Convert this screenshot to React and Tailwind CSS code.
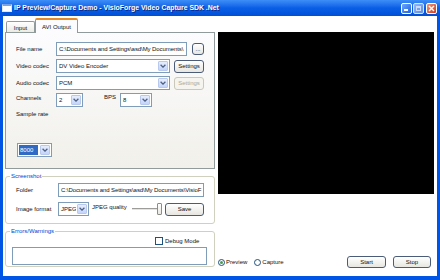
import React from "react";

function Chevron() {
  return (
    <svg width="6" height="4" viewBox="0 0 6 4">
      <path d="M0.6 0.7 L3 3.1 L5.4 0.7" fill="none" stroke="#4d6185" strokeWidth="1.3" />
    </svg>
  );
}

function Combo({ className, text, selected }) {
  return (
    <div className={"flex h-[14px] border border-[#7f9db9] bg-white " + className}>
      {selected ? (
        <div className="flex-1 m-px flex items-center pl-[1px] bg-[#316ac5] text-white whitespace-nowrap overflow-hidden">{text}</div>
      ) : (
        <div className="flex-1 flex items-center pl-[2px] whitespace-nowrap overflow-hidden">{text}</div>
      )}
      <div className="w-[10px] m-px rounded-[1px] border border-[#b9c9ee] bg-linear-to-b from-[#e6edfd] to-[#c4d5fa] flex items-center justify-center">
        <Chevron />
      </div>
    </div>
  );
}

function TextBox({ className, children }) {
  return (
    <div className={"h-[14px] border border-[#7f9db9] bg-white flex items-center pl-[2px] overflow-hidden whitespace-nowrap tracking-[-0.08px] " + className}>
      {children}
    </div>
  );
}

function Btn({ className, children, disabled }) {
  return (
    <div
      className={
        "flex items-center justify-center rounded-[3px] border whitespace-nowrap " +
        (disabled
          ? "border-[#cac8bb] text-[#aca899] bg-[#f5f4ee] "
          : "border-[#4a5c78] bg-linear-to-b from-white to-[#e7e6e0] ") +
        className
      }
    >
      {children}
    </div>
  );
}

export default function App() {
  return (
    <div className="w-[440px] h-[280px] flex flex-col bg-[#0055e5] overflow-hidden text-[#111] text-[6px] leading-none font-['Liberation_Sans',Arial,sans-serif]">
      {/* Title bar */}
      <div className="h-[16px] flex items-center bg-linear-to-b from-[#3d8ef7] via-[#0a5ee6] to-[#0050d6] pl-[2px] pr-[3px]">
        <div className="w-[10px] h-[8px] bg-white border border-[#dfe8f7] border-t-[2px] border-t-[#7ba3e8]" />
        <span className="ml-[2px] text-white font-bold text-[6.9px] [text-shadow:1px_1px_0_#0b2a8a] whitespace-nowrap">
          IP Preview/Capture Demo - VisioForge Video Capture SDK .Net
        </span>
        <div className="ml-auto flex items-center">
          <div className="w-[11px] h-[11px] rounded-[2px] border border-white bg-linear-to-br from-[#6aa6ff] to-[#1f5fdc] flex items-end pl-[2px] pb-[2px]">
            <div className="w-[4px] h-[2px] bg-white" />
          </div>
          <div className="ml-px w-[11px] h-[11px] rounded-[2px] border border-[#d7e3fa] bg-linear-to-br from-[#8fb5f5] to-[#5a8ee8] flex items-center justify-center">
            <div className="w-[5px] h-[5px] border border-[#c9daf8] border-t-2" />
          </div>
          <div className="ml-[2px] w-[11px] h-[11px] rounded-[2px] border border-white bg-linear-to-br from-[#ee9375] to-[#c8391b] flex items-center justify-center">
            <svg width="7" height="7" viewBox="0 0 7 7">
              <path d="M1 1 L6 6 M6 1 L1 6" stroke="white" strokeWidth="1.4" />
            </svg>
          </div>
        </div>
      </div>

      {/* Body */}
      <div className="flex-1 flex px-[3px] pb-[4px] min-h-0">
        <div className="flex-1 bg-white flex">
          {/* Left column */}
          <div className="ml-[2px] w-[210px] flex flex-col">
            {/* Tabs */}
            <div className="h-[16px] flex items-end pl-[1px] relative z-10">
              <div className="w-[29px] h-[11px] pt-px border border-b-0 border-[#919b9c] rounded-t-[2px] bg-linear-to-b from-white to-[#ecebe5] flex items-center justify-center">
                Input
              </div>
              <div className="w-[43px] h-[15px] -mb-px border border-b-0 border-[#919b9c] border-t-2 border-t-[#e68b2c] rounded-t-[2px] bg-[#fcfcfe] flex items-center justify-center">
                AVI Output
              </div>
            </div>
            {/* Tab page */}
            <div className="h-[137px] border border-[#919b9c] bg-linear-to-b from-[#fcfcfe] to-[#f1f0ea] flex flex-col pl-[10px] pt-[9px] gap-[3px]">
              <div className="flex items-center h-[14px]">
                <span className="w-[40px]">File name</span>
                <TextBox className="w-[131px]">C:\Documents and Settings\asd\My Documents\</TextBox>
                <Btn className="ml-[5px] w-[12px] h-[12px]">...</Btn>
              </div>
              <div className="flex items-center h-[14px]">
                <span className="w-[40px]">Video codec</span>
                <Combo className="w-[114px]" text="DV Video Encoder" />
                <Btn className="ml-[4px] w-[30px] h-[13px]">Settings</Btn>
              </div>
              <div className="flex items-center h-[14px]">
                <span className="w-[40px]">Audio codec</span>
                <Combo className="w-[114px]" text="PCM" />
                <Btn disabled className="ml-[4px] w-[30px] h-[13px]">Settings</Btn>
              </div>
              <div className="flex items-center h-[14px]">
                <span className="w-[40px] self-start mt-[2px]">Channels</span>
                <Combo className="w-[27px]" text="2" />
                <span className="ml-[21px] w-[16px] self-start mt-[1px]">BPS</span>
                <Combo className="w-[32px]" text="8" />
              </div>
              <div className="h-[8px] flex items-center">Sample rate</div>
              <div className="mt-[22px] ml-px flex">
                <Combo className="w-[35px]" text="8000" selected />
              </div>
            </div>

            {/* Screenshot group */}
            <fieldset className="mt-[3px] border border-[#d0d0bf] rounded-[3px] pb-[7px]">
              <legend className="ml-[4px] px-px text-[#0046d5] leading-[8px]">Screenshot</legend>
              <div className="flex flex-col pl-[10px]">
                <div className="mt-[3px] flex items-center h-[14px]">
                  <span className="w-[42px]">Folder</span>
                  <TextBox className="w-[146px]">C:\Documents and Settings\asd\My Documents\VisioF</TextBox>
                </div>
                <div className="mt-[5px] flex items-center h-[14px]">
                  <span className="w-[42px]">Image format</span>
                  <Combo className="w-[31px]" text="JPEG" />
                  <span className="ml-[3px] w-[39px] self-start mt-[2px] whitespace-nowrap">JPEG quality</span>
                  <div className="w-[31px] flex items-center">
                    <div className="ml-px w-[25px] h-[3px] border-t border-[#9d9c99] border-b border-b-white bg-[#e4e3dd]" />
                    <div className="w-[5px] h-[12px] border border-[#8c8c88] rounded-[1px] bg-linear-to-b from-white to-[#e8e7e2]" />
                  </div>
                  <Btn className="ml-[3px] w-[39px] h-[13px]">Save</Btn>
                </div>
              </div>
            </fieldset>

            {/* Errors group */}
            <fieldset className="mt-[3px] border border-[#d0d0bf] rounded-[3px] pb-px">
              <legend className="ml-[4px] px-px text-[#0046d5] leading-[8px]">Errors/Warnings</legend>
              <div className="flex flex-col">
                <div className="mt-[2px] h-[8px] flex items-center pl-[149px]">
                  <div className="w-[8px] h-[8px] border border-[#1c5180] bg-white" />
                  <span className="ml-[2px]">Debug Mode</span>
                </div>
                <div className="mt-[2px] ml-[6px] w-[195px] h-[18px] border border-[#7f9db9] bg-white" />
              </div>
            </fieldset>
          </div>

          {/* Right column */}
          <div className="ml-[3px] w-[216px] flex flex-col">
            <div className="mt-[16px] h-[162px] bg-black" />
            <div className="mt-[62px] h-[12px] flex items-center mr-[3px]">
              <div className="w-[7px] h-[7px] rounded-full border border-[#1c5180] bg-white flex items-center justify-center">
                <div className="w-[3px] h-[3px] rounded-full bg-[#4f9a4f]" />
              </div>
              <span className="ml-px">Preview</span>
              <div className="ml-[7px] w-[7px] h-[7px] rounded-full border border-[#1c5180] bg-white" />
              <span className="ml-px">Capture</span>
              <Btn className="ml-auto w-[39px] h-[12px]">Start</Btn>
              <Btn className="ml-[7px] w-[38px] h-[12px]">Stop</Btn>
            </div>
          </div>
        </div>
      </div>
    </div>
  );
}
